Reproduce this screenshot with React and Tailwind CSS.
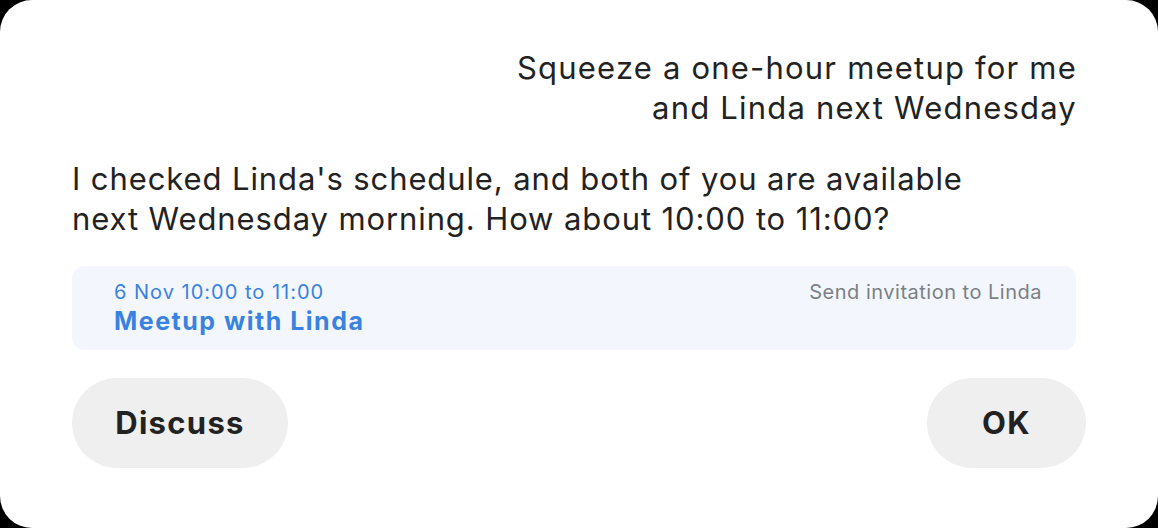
export default function App() {
  return (
    <div className="h-[528px] w-[1158px] bg-black" style={{ fontFamily: 'Inter, "Noto Sans", sans-serif' }}>
      <div className="flex h-full w-full flex-col rounded-[32px] bg-white px-[72px] pt-[48px] text-[#222222]">
        <div className="mr-[9px] text-right text-[31px] leading-[40px] tracking-[1.2px]">
          Squeeze a one-hour meetup for me
          <br />
          and Linda next Wednesday
        </div>
        <div className="mt-[31px] text-[31px] leading-[40px] tracking-[0.9px]">
          I checked Linda's schedule, and both of you are available
          <br />
          next Wednesday morning. How about 10:00 to 11:00?
        </div>
        <div className="mr-[10px] mt-[27px] flex h-[84px] items-start justify-between rounded-[12px] bg-[#f3f7fd] pl-[42px] pr-[34px] pt-[13px]">
          <div className="flex flex-col">
            <span className="text-[20px] leading-[26px] tracking-[1px] text-[#3a82e2]">6 Nov 10:00 to 11:00</span>
            <span className="text-[25px] font-bold leading-[32px] tracking-[1.5px] text-[#3a82e2]">Meetup with Linda</span>
          </div>
          <span className="text-[20px] leading-[26px] tracking-[0.5px] text-[#7b7f86]">Send invitation to Linda</span>
        </div>
        <div className="mt-[28px] flex items-center justify-between">
          <button className="h-[90px] w-[216px] rounded-full bg-[#efefef] text-[31px] font-bold tracking-[1.3px] text-[#222222]">
            Discuss
          </button>
          <button className="h-[90px] w-[159px] rounded-full bg-[#efefef] text-[31px] font-bold tracking-[1.5px] text-[#222222]">
            OK
          </button>
        </div>
      </div>
    </div>
  );
}
